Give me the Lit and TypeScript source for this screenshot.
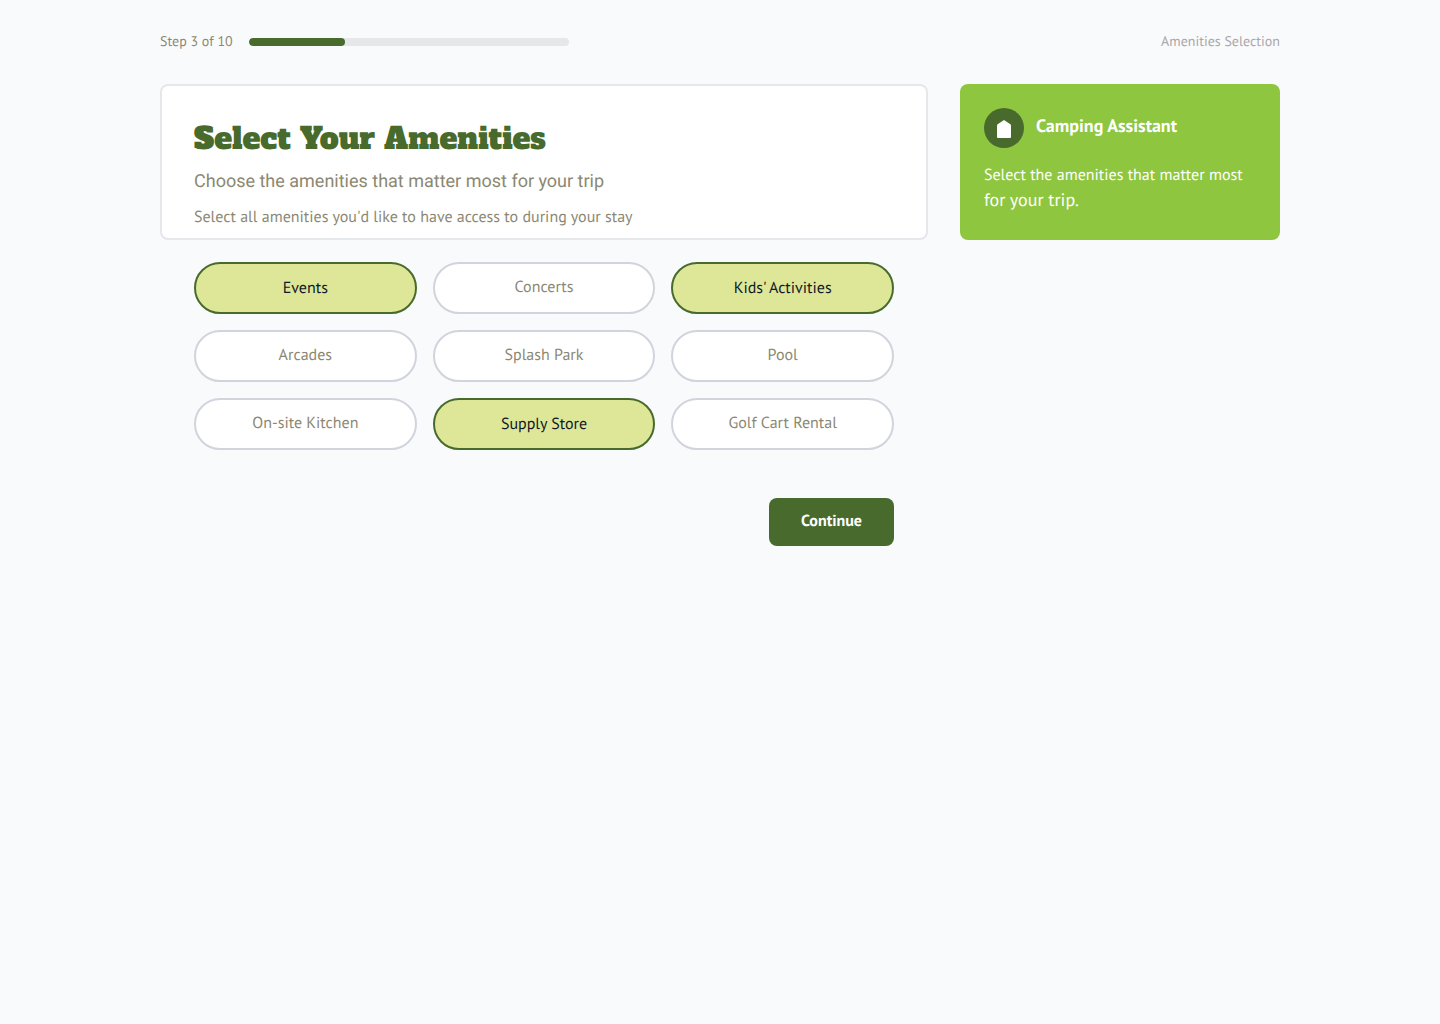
import { LitElement, html, css } from "lit";
import { customElement, property, state } from "lit/decorators.js";
import { classMap } from "lit/directives/class-map.js";

const AMENITIES = [
  "Events",
  "Concerts",
  "Kids' Activities",
  "Arcades",
  "Splash Park",
  "Pool",
  "On-site Kitchen",
  "Supply Store",
  "Golf Cart Rental",
];

@customElement("step-progress")
export class StepProgress extends LitElement {
  @property({ type: Number }) step = 1;
  @property({ type: Number }) total = 10;
  @property() name = "";

  static styles = css`
    :host {
      display: block;
    }
    .bar {
      display: flex;
      align-items: center;
      gap: 16px;
      height: 20px;
      font-size: 14px;
      line-height: 18px;
      color: #8b8872;
    }
    .bar span {
      padding-bottom: 2px;
    }
    .track {
      flex: 0 1 320px;
      height: 8px;
      border-radius: 4px;
      background: #e5e7eb;
      overflow: hidden;
    }
    .fill {
      height: 100%;
      border-radius: 4px;
      background: #486b2d;
    }
    .name {
      margin-left: auto;
      color: #aaa6a8;
    }
  `;

  render() {
    return html`
      <div class="bar">
        <span id="label">Step ${this.step} of ${this.total}</span>
        <div
          class="track"
          role="progressbar"
          aria-labelledby="label"
          aria-valuemin="0"
          aria-valuemax=${this.total}
          aria-valuenow=${this.step}
        >
          <div class="fill" style="width: ${(this.step / this.total) * 100}%"></div>
        </div>
        <span class="name">${this.name}</span>
      </div>
    `;
  }
}

@customElement("assistant-card")
export class AssistantCard extends LitElement {
  static styles = css`
    :host {
      display: block;
    }
    .card {
      box-sizing: border-box;
      min-height: 156px;
      padding: 24px;
      border-radius: 8px;
      background: #8ec63f;
      color: #ffffff;
    }
    .head {
      display: flex;
      align-items: center;
      gap: 12px;
    }
    .icon {
      display: block;
      width: 40px;
      height: 40px;
    }
    h2 {
      margin: 0;
      padding-bottom: 4px;
      font-size: 18px;
      line-height: 24px;
      font-weight: 700;
    }
    p {
      margin: 14px 0 0;
      font-size: 16px;
      line-height: 26px;
    }
    .purpose {
      font-size: 18px;
      line-height: 24px;
    }
  `;

  render() {
    return html`
      <aside class="card">
        <div class="head">
          <svg class="icon" viewBox="0 0 40 40" aria-hidden="true">
            <circle cx="20" cy="20" r="20" fill="#486b2d" />
            <path
              d="M20 12 L26.4 16.2 Q27 16.6 27 17.4 V29 Q27 30 26 30 H14 Q13 30 13 29 V17.4 Q13 16.6 13.6 16.2 Z"
              fill="#ffffff"
            />
          </svg>
          <h2>Camping Assistant</h2>
        </div>
        <p>Select the amenities that matter most <span class="purpose">for your trip.</span></p>
      </aside>
    `;
  }
}

@customElement("app-root")
export class AppRoot extends LitElement {
  @state() private selected = new Set(["Events", "Kids' Activities", "Supply Store"]);

  static styles = css`
    :host {
      display: block;
      min-height: 100vh;
      background: #f9fafc;
      font-family: "PT Sans", "Noto Sans", sans-serif;
      text-rendering: geometricPrecision;
    }
    .page {
      box-sizing: border-box;
      max-width: 1184px;
      margin: 0 auto;
      padding: 32px;
    }
    .columns {
      display: grid;
      grid-template-columns: minmax(0, 1fr) 320px;
      align-items: start;
      gap: 32px;
      margin-top: 32px;
    }
    .intro {
      padding: 32px 32px 8px;
      border: 2px solid #e5e7eb;
      border-radius: 8px;
      background: #ffffff;
    }
    h1 {
      margin: 0;
      font-family: "Alfa Slab One", "DejaVu Serif", serif;
      font-size: 30px;
      line-height: 42px;
      font-weight: 400;
      color: #486b2d;
    }
    .lead {
      margin: 8px 0 0;
      font-family: Roboto, sans-serif;
      font-size: 18px;
      line-height: 28px;
      color: #8b8872;
    }
    .hint {
      margin: 8px 0 0;
      font-size: 16px;
      line-height: 26px;
      color: #8b8872;
    }
    form {
      padding: 22px 34px;
    }
    fieldset {
      display: grid;
      grid-template-columns: repeat(3, minmax(0, 1fr));
      gap: 16px;
      min-width: 0;
      margin: 0;
      padding: 0;
      border: 0;
    }
    .chip {
      position: relative;
      box-sizing: border-box;
      display: flex;
      align-items: center;
      justify-content: center;
      height: 52px;
      padding: 0 16px 2px;
      border: 2px solid #d1d4dd;
      border-radius: 26px;
      background: #ffffff;
      color: #8b8872;
      font-size: 16px;
      line-height: 24px;
      cursor: pointer;
    }
    .chip.on {
      padding-bottom: 0;
      border-color: #486b2d;
      background: #dde797;
      color: #111827;
    }
    .chip input {
      position: absolute;
      inset: 0;
      margin: 0;
      opacity: 0;
      cursor: pointer;
    }
    .chip:focus-within {
      outline: 2px solid #8ec63f;
      outline-offset: 2px;
    }
    .actions {
      display: flex;
      justify-content: flex-end;
      margin-top: 48px;
    }
    button {
      height: 48px;
      padding: 0 32px 2px;
      border: 0;
      border-radius: 8px;
      background: #486b2d;
      color: #ffffff;
      font-family: inherit;
      font-size: 16px;
      line-height: 24px;
      font-weight: 700;
      text-rendering: inherit;
      cursor: pointer;
    }
    @media (max-width: 900px) {
      .columns {
        grid-template-columns: minmax(0, 1fr);
      }
    }
  `;

  private toggle(name: string) {
    const next = new Set(this.selected);
    if (!next.delete(name)) next.add(name);
    this.selected = next;
  }

  render() {
    return html`
      <div class="page">
        <step-progress step="3" total="10" name="Amenities Selection"></step-progress>
        <div class="columns">
          <main>
            <header class="intro">
              <h1>Select Your Amenities</h1>
              <p class="lead">Choose the amenities that matter most for your trip</p>
              <p class="hint" id="hint">
                Select all amenities you'd like to have access to during your stay
              </p>
            </header>
            <form @submit=${(e: Event) => e.preventDefault()}>
              <fieldset aria-labelledby="hint">
                ${AMENITIES.map(
                  (name) => html`
                    <label class=${classMap({ chip: true, on: this.selected.has(name) })}>
                      <input
                        type="checkbox"
                        name="amenity"
                        .checked=${this.selected.has(name)}
                        @change=${() => this.toggle(name)}
                      />
                      <span>${name}</span>
                    </label>
                  `,
                )}
              </fieldset>
              <div class="actions">
                <button type="submit">Continue</button>
              </div>
            </form>
          </main>
          <assistant-card></assistant-card>
        </div>
      </div>
    `;
  }
}
